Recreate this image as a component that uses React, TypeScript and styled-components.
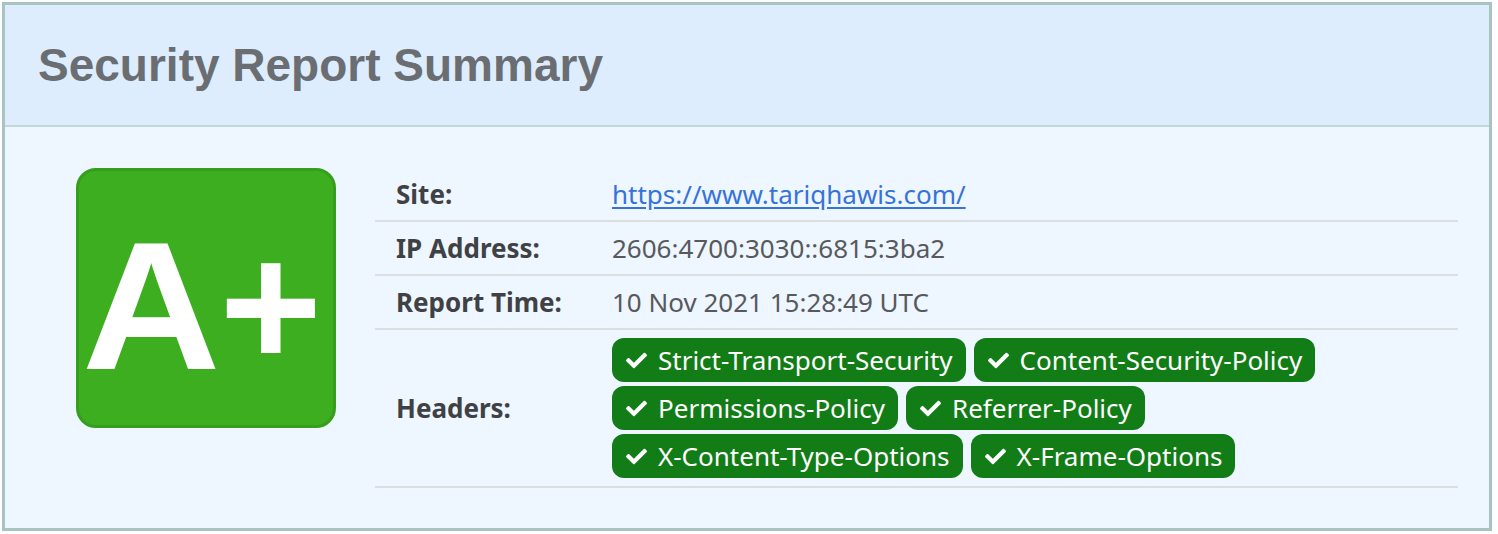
import React from "react";
import styled, { createGlobalStyle } from "styled-components";
import { FaCheck } from "react-icons/fa";

const Global = createGlobalStyle`
  html, body { margin: 0; padding: 0; background: #ffffff; }
  body { font-family: "Noto Sans", "Open Sans", sans-serif; }
`;

const Panel = styled.section`
  margin: 2px 0 0 2px;
  width: 1490px;
  height: 529px;
  box-sizing: border-box;
  border: 3px solid #a9c2c2;
  background: #eef6ff;
  display: flex;
  flex-direction: column;
`;

const Header = styled.header`
  height: 122px;
  box-sizing: border-box;
  background: #ddedfd;
  border-bottom: 2px solid #c4d6d8;
  display: flex;
  align-items: center;
  padding-left: 33px;
`;

const Title = styled.h1`
  margin: 0;
  font-family: "Liberation Sans", Arial, sans-serif;
  font-weight: 700;
  font-size: 46px;
  color: #6a6d72;
  letter-spacing: 0;
`;

const Body = styled.div`
  display: flex;
  align-items: flex-start;
  padding: 41px 31px 0 71px;
`;

const Grade = styled.div`
  width: 260px;
  height: 260px;
  box-sizing: border-box;
  flex: none;
  border-radius: 20px;
  border: 3px solid #379e1d;
  background: #3dae1f;
  display: flex;
  align-items: center;
  justify-content: center;
  color: #ffffff;
  font-family: "Liberation Sans", Arial, sans-serif;
  font-weight: 700;
  font-size: 181px;
  line-height: 1;
  padding-top: 16px;
  padding-right: 2px;
`;

const GradeLetter = styled.span`
  display: inline-block;
  transform: scaleX(1.06);
  margin-right: 1px;
`;

const Plus = styled.span`
  display: inline-block;
  transform: scale(0.97);
`;

const Table = styled.div`
  flex: 1;
  margin-left: 39px;
  display: flex;
  flex-direction: column;
`;

const Row = styled.div<{ $pad: number }>`
  display: grid;
  grid-template-columns: 237px 1fr;
  align-items: center;
  padding: ${(p) => p.$pad}px 0;
  border-bottom: 2px solid #dcdfe2;
`;

const Label = styled.div`
  padding-left: 21px;
  font-weight: 700;
  font-size: 26px;
  color: #404144;
  line-height: 34px;
`;

const Value = styled.div`
  font-size: 26px;
  color: #58595c;
  line-height: 34px;
`;

const Link = styled.a`
  color: #3673d8;
  text-decoration: underline;
  text-underline-offset: 3px;
`;

const Badges = styled.div`
  display: flex;
  flex-wrap: wrap;
  gap: 4px 8px;
  width: 720px;
`;

const Badge = styled.span`
  display: inline-flex;
  align-items: center;
  gap: 11px;
  height: 44px;
  box-sizing: border-box;
  padding: 0 13px 0 14px;
  border-radius: 12px;
  background: #127c16;
  color: #ffffff;
  font-size: 26px;
  white-space: nowrap;
  svg { width: 21px; height: 21px; flex: none; }
`;

const headers = [
  "Strict-Transport-Security",
  "Content-Security-Policy",
  "Permissions-Policy",
  "Referrer-Policy",
  "X-Content-Type-Options",
  "X-Frame-Options",
];

export default function App() {
  return (
    <>
      <Global />
      <Panel>
        <Header>
          <Title>Security Report Summary</Title>
        </Header>
        <Body>
          <Grade>
            <GradeLetter>A</GradeLetter>
            <Plus>+</Plus>
          </Grade>
          <Table>
            <Row $pad={9}>
              <Label>Site:</Label>
              <Value>
                <Link href="#">https://www.tariqhawis.com/</Link>
              </Value>
            </Row>
            <Row $pad={9}>
              <Label>IP Address:</Label>
              <Value>2606:4700:3030::6815:3ba2</Value>
            </Row>
            <Row $pad={9}>
              <Label>Report Time:</Label>
              <Value>10 Nov 2021 15:28:49 UTC</Value>
            </Row>
            <Row $pad={8}>
              <Label>Headers:</Label>
              <Badges>
                {headers.map((h) => (
                  <Badge key={h}>
                    <FaCheck />
                    {h}
                  </Badge>
                ))}
              </Badges>
            </Row>
          </Table>
        </Body>
      </Panel>
    </>
  );
}
